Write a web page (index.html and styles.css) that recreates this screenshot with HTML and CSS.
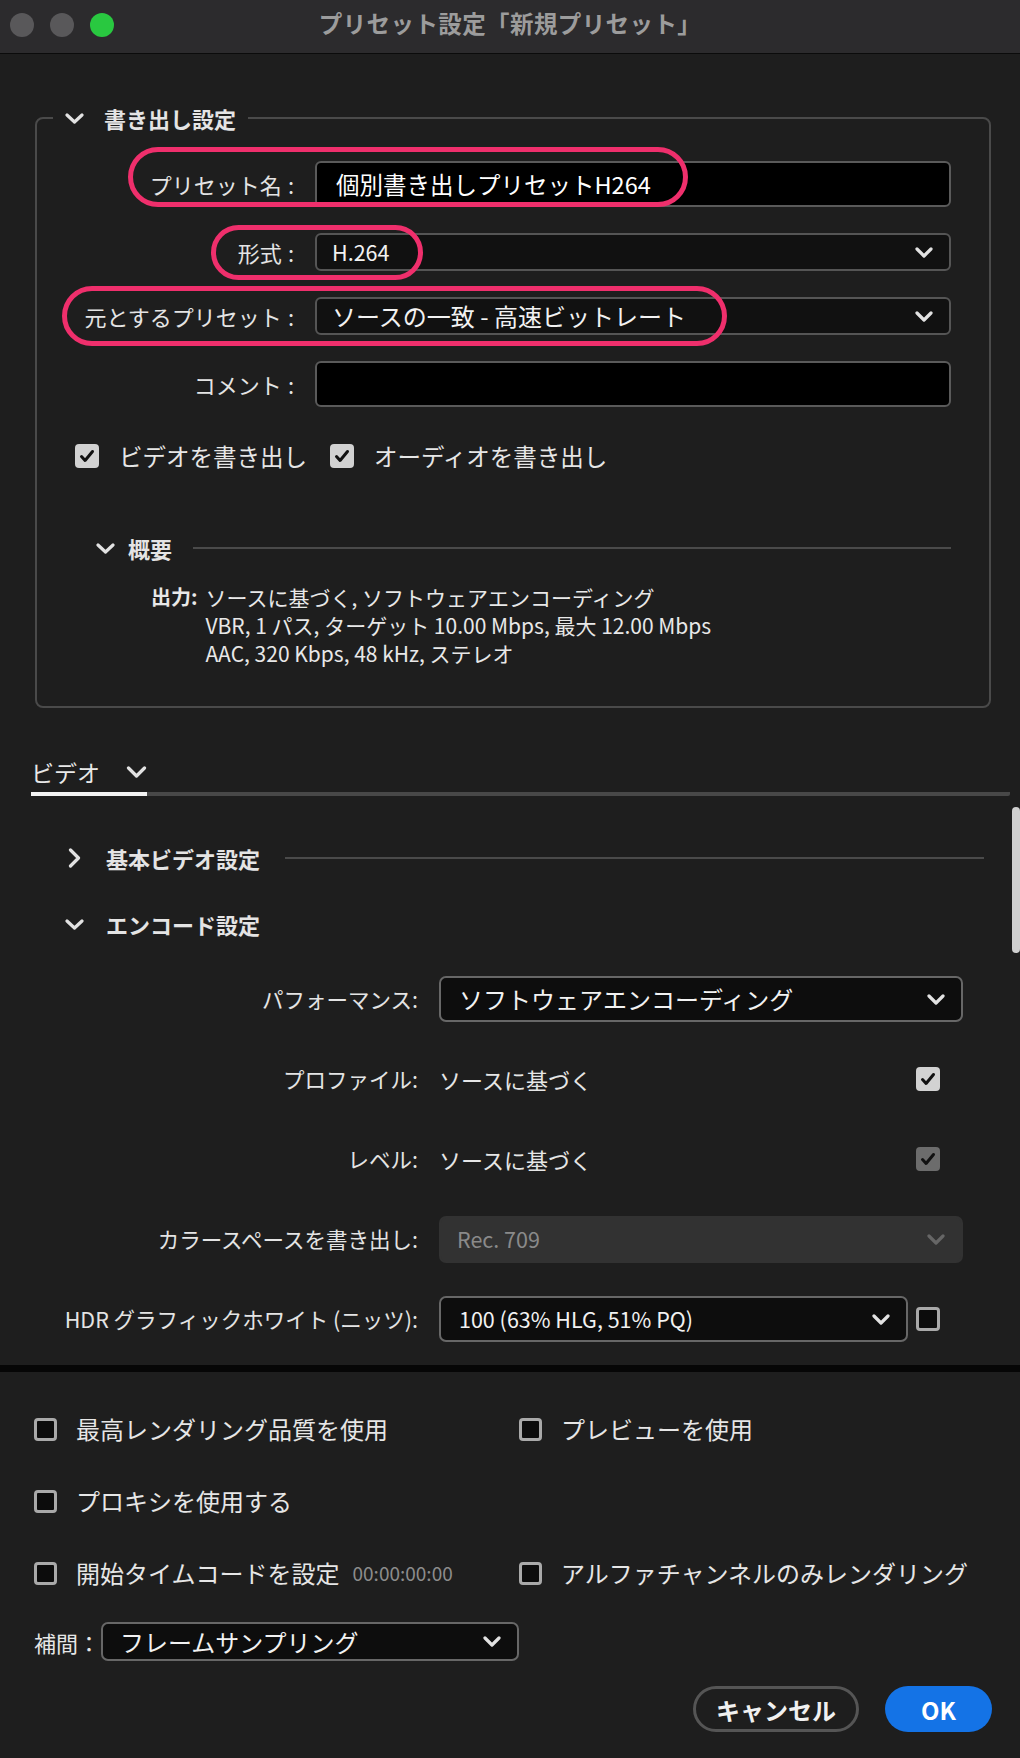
FILE: index.html
```html
<!DOCTYPE html>
<html lang="ja">
<head>
    <meta charset="UTF-8">
    <title>プリセット設定「新規プリセット」</title>
    <link rel="stylesheet" href="styles.css">
</head>
<body>
<div class="window">
    <div class="titlebar">
        <div class="lights">
            <span class="light"></span>
            <span class="light"></span>
            <span class="light green"></span>
        </div>
        <div class="title">プリセット設定「新規プリセット」</div>
        <div></div>
    </div>

    <div class="scroll-area">
        <fieldset class="export-box">
            <legend>
                <svg class="chev-down" width="19" height="11" viewBox="0 0 19 11"><path d="M2 2l7.5 7 7.5-7"/></svg>
                <span>書き出し設定</span>
            </legend>

            <div class="form">
                <div class="label">プリセット名<span class="colon">:</span></div>
                <div class="text-input">個別書き出しプリセットH264</div>

                <div class="label">形式<span class="colon">:</span></div>
                <div class="select">
                    <span class="latin">H.264</span>
                    <svg class="chev-down" width="18" height="11" viewBox="0 0 18 11"><path d="M2 2l7 7 7-7"/></svg>
                </div>

                <div class="label">元とするプリセット<span class="colon">:</span></div>
                <div class="select">
                    <span>ソースの一致 - 高速ビットレート</span>
                    <svg class="chev-down" width="18" height="11" viewBox="0 0 18 11"><path d="M2 2l7 7 7-7"/></svg>
                </div>

                <div class="label">コメント<span class="colon">:</span></div>
                <div class="text-input tall"></div>
            </div>

            <div class="checks">
                <label class="check-item">
                    <span class="box checked"><svg width="24" height="24" viewBox="0 0 24 24"><path d="M6.5 12.5l3.6 4 7.4-9"/></svg></span>
                    ビデオを書き出し
                </label>
                <label class="check-item">
                    <span class="box checked"><svg width="24" height="24" viewBox="0 0 24 24"><path d="M6.5 12.5l3.6 4 7.4-9"/></svg></span>
                    オーディオを書き出し
                </label>
            </div>

            <div class="summary-head">
                <span class="chev-slot"><svg class="chev-down" width="19" height="11" viewBox="0 0 19 11"><path d="M2 2l7.5 7 7.5-7"/></svg></span>
                <span class="head-text">概要</span>
                <span class="rule"></span>
            </div>

            <div class="summary">
                <div class="summary-label">出力:</div>
                <div>
                    ソースに基づく, ソフトウェアエンコーディング<br>
                    VBR, 1 パス, ターゲット 10.00 Mbps, 最大 12.00 Mbps<br>
                    AAC, 320 Kbps, 48 kHz, ステレオ
                </div>
            </div>
        </fieldset>

        <div class="tabs">
            <div class="tab">
                <span>ビデオ</span>
                <svg class="chev-down" width="21" height="12" viewBox="0 0 21 12"><path d="M2.5 2l8 8 8-8"/></svg>
            </div>
        </div>

        <div class="section-head">
            <span class="chev-slot"><svg class="chev-right" width="13" height="20" viewBox="0 0 13 20"><path d="M2.5 2l8 8-8 8"/></svg></span>
            <span class="head-text">基本ビデオ設定</span>
            <span class="rule"></span>
        </div>

        <div class="section-head open">
            <span class="chev-slot"><svg class="chev-down" width="19" height="11" viewBox="0 0 19 11"><path d="M2 2l7.5 7 7.5-7"/></svg></span>
            <span class="head-text">エンコード設定</span>
        </div>

        <div class="encode">
            <div class="label">パフォーマンス:</div>
            <div class="select dark">
                <span>ソフトウェアエンコーディング</span>
                <svg class="chev-down" width="18" height="11" viewBox="0 0 18 11"><path d="M2 2l7 7 7-7"/></svg>
            </div>

            <div class="label">プロファイル:</div>
            <div class="value-row">
                <span>ソースに基づく</span>
                <span class="box checked"><svg width="24" height="24" viewBox="0 0 24 24"><path d="M6.5 12.5l3.6 4 7.4-9"/></svg></span>
            </div>

            <div class="label">レベル:</div>
            <div class="value-row">
                <span>ソースに基づく</span>
                <span class="box checked dim"><svg width="24" height="24" viewBox="0 0 24 24"><path d="M6.5 12.5l3.6 4 7.4-9"/></svg></span>
            </div>

            <div class="label">カラースペースを書き出し:</div>
            <div class="select disabled">
                <span class="latin">Rec. 709</span>
                <svg class="chev-down" width="18" height="11" viewBox="0 0 18 11"><path d="M2 2l7 7 7-7"/></svg>
            </div>

            <div class="label">HDR グラフィックホワイト (ニッツ):</div>
            <div class="value-row">
                <div class="select dark grow">
                    <span class="latin">100 (63% HLG, 51% PQ)</span>
                    <svg class="chev-down" width="18" height="11" viewBox="0 0 18 11"><path d="M2 2l7 7 7-7"/></svg>
                </div>
                <span class="box"></span>
            </div>
        </div>

        <div class="scrollbar"></div>

        <div class="mark mark-name"></div>
        <div class="mark mark-format"></div>
        <div class="mark mark-base"></div>
    </div>

    <div class="divider"></div>

    <div class="bottom">
        <div class="options">
            <label class="check-item"><span class="box"></span>最高レンダリング品質を使用</label>
            <label class="check-item"><span class="box"></span>プレビューを使用</label>
            <label class="check-item"><span class="box"></span>プロキシを使用する</label>
            <div></div>
            <label class="check-item"><span class="box"></span>開始タイムコードを設定<span class="timecode">00:00:00:00</span></label>
            <label class="check-item"><span class="box"></span>アルファチャンネルのみレンダリング</label>
        </div>

        <div class="interp">
            <div class="interp-label">補間：</div>
            <div class="select dark small">
                <span>フレームサンプリング</span>
                <svg class="chev-down" width="18" height="11" viewBox="0 0 18 11"><path d="M2 2l7 7 7-7"/></svg>
            </div>
        </div>

        <div class="buttons">
            <button class="btn cancel">キャンセル</button>
            <button class="btn ok">OK</button>
        </div>
    </div>
</div>
</body>
</html>
```

FILE: styles.css
```css
body {
    margin: 0;
    background: #1e1e1e;
    color: #e6e6e6;
    font-family: "Noto Sans CJK JP", "Noto Sans", sans-serif;
    font-size: 22px;
    line-height: 30px;
}

.window {
    width: 1020px;
    height: 1758px;
    overflow: hidden;
}

/* title bar */
.titlebar {
    height: 49px;
    padding-bottom: 4px;
    background: #2c2b2d;
    border-bottom: 1px solid #0b0b0b;
    display: grid;
    grid-template-columns: 1fr auto 1fr;
    align-items: center;
}

.lights {
    display: flex;
    gap: 16px;
    padding-left: 10px;
}

.light {
    width: 24px;
    height: 24px;
    border-radius: 50%;
    background: #59585a;
}

.light.green {
    background: #29c840;
}

.title {
    margin-bottom: 4px;
    font-size: 23.5px;
    font-weight: 700;
    color: #9c9c9c;
    letter-spacing: 0.4px;
}

/* icons */
svg path {
    fill: none;
    stroke-linecap: round;
    stroke-linejoin: round;
}

.chev-down path,
.chev-right path {
    stroke: #e2e2e2;
    stroke-width: 3.2;
}

/* scrolling part */
.scroll-area {
    position: relative;
    padding-top: 49px;
    padding-bottom: 23px;
}

.export-box {
    margin: 0 29px 0 35px;
    padding: 0 38px 39px 0;
    border: 2px solid #4a4a4a;
    border-radius: 8px;
    min-width: 0;
}

.export-box legend {
    margin-left: 16px;
    padding: 0 12px;
    display: flex;
    align-items: center;
    gap: 20px;
    font-weight: 700;
    color: #e4e4e4;
}

.form {
    display: grid;
    grid-template-columns: 257px 1fr;
    column-gap: 21px;
    row-gap: 26px;
    align-items: center;
    margin-top: 28px;
}

.label {
    text-align: right;
    color: #e4e4e4;
    white-space: nowrap;
}

.colon {
    margin-left: 6px;
}

.text-input {
    box-sizing: border-box;
    height: 46px;
    background: #000;
    border: 2px solid #5a5a5a;
    border-radius: 6px;
    padding-left: 19px;
    font-size: 23.5px;
    line-height: 42px;
    color: #fff;
}

.select {
    box-sizing: border-box;
    height: 38px;
    background: #111;
    border: 2px solid #555;
    border-radius: 6px;
    padding: 0 16px 0 15px;
    display: flex;
    align-items: center;
    justify-content: space-between;
    font-size: 24px;
    color: #f2f2f2;
}

.select .latin {
    font-size: 21.5px;
}

.select.dark {
    height: 46px;
    background: #0d0d0d;
    border-color: #676767;
    border-radius: 7px;
    padding-left: 18px;
}

.select.disabled {
    height: 47px;
    background: #323232;
    border-color: #323232;
    border-radius: 7px;
    padding-left: 16px;
    color: #8a8a8a;
}

.select.disabled .chev-down path {
    stroke: #666;
}

.select.grow {
    flex: 1;
}

.select.small {
    width: 418px;
    height: 39px;
    padding-left: 17px;
}

.checks {
    display: flex;
    gap: 23px;
    margin-top: 34px;
    padding-left: 38px;
}

.check-item {
    display: flex;
    align-items: center;
    gap: 20px;
    font-size: 23.5px;
    white-space: nowrap;
}

.box {
    box-sizing: border-box;
    width: 24px;
    height: 24px;
    border-radius: 4px;
    border: 3px solid #a9a9a9;
    background: #0c0c0c;
    flex: none;
}

.box.checked {
    border: none;
    background: #d2d2d2;
}

.box.checked.dim {
    background: #6c6c6c;
}

.box svg {
    display: block;
}

.box svg path {
    stroke: #111;
    stroke-width: 3;
}

.summary-head,
.section-head {
    display: flex;
    align-items: center;
    font-weight: 700;
    color: #e4e4e4;
}

.summary-head {
    margin-top: 62px;
    padding-left: 59px;
    gap: 13px;
}

.chev-slot {
    width: 19px;
    display: flex;
    justify-content: center;
}

.rule {
    flex: 1;
    height: 2px;
    background: #4a4a4a;
    margin-left: 8px;
}

.summary {
    display: grid;
    grid-template-columns: auto 1fr;
    column-gap: 8px;
    margin-top: 20px;
    padding-left: 114px;
    font-size: 21px;
    line-height: 28px;
    color: #e8e8e8;
}

.summary-label {
    font-size: 20px;
    font-weight: 700;
}

/* tabs */
.tabs {
    margin: 49px 10px 0 31px;
    border-bottom: 4px solid #484848;
    border-radius: 2px;
    display: flex;
}

.tab {
    display: flex;
    align-items: center;
    gap: 26px;
    padding-bottom: 5px;
    margin-bottom: -4px;
    border-bottom: 4px solid #f2f2f2;
    font-size: 23px;
    color: #e8e8e8;
}

.section-head {
    margin: 47px 36px 0 65px;
    gap: 22px;
}

.section-head .rule {
    margin-left: 3px;
}

.section-head.open {
    margin-top: 36px;
}

.encode {
    display: grid;
    grid-template-columns: 418px 524px;
    column-gap: 21px;
    grid-auto-rows: 46px;
    row-gap: 34px;
    align-items: center;
    margin-top: 37px;
}

.encode .label {
    font-size: 21.5px;
}

.value-row {
    display: flex;
    align-items: center;
    justify-content: space-between;
    gap: 8px;
    padding-right: 23px;
}

.scrollbar {
    position: absolute;
    right: 0;
    top: 753px;
    width: 8px;
    height: 146px;
    border-radius: 4px;
    background: #cfcfcf;
}

/* pink annotation rings */
.mark {
    position: absolute;
    box-sizing: border-box;
    border: 5px solid #ef2f6c;
    border-radius: 40px;
}

.mark-name {
    left: 128px;
    top: 93px;
    width: 560px;
    height: 60px;
}

.mark-format {
    left: 211px;
    top: 171px;
    width: 212px;
    height: 55px;
}

.mark-base {
    left: 62px;
    top: 232px;
    width: 665px;
    height: 60px;
}

.divider {
    height: 7px;
    background: #060606;
}

/* bottom panel */
.bottom {
    padding: 41px 28px 0 34px;
}

.options {
    display: grid;
    grid-template-columns: 485px auto;
    grid-auto-rows: 32px;
    row-gap: 40px;
    align-items: center;
}

.options .check-item {
    gap: 19px;
    font-size: 24px;
}

.options .box {
    width: 23px;
    height: 23px;
}

.timecode {
    margin-left: -6px;
    font-size: 19px;
    color: #8c8c8c;
}

.interp {
    display: flex;
    align-items: center;
    margin-top: 33px;
}

.interp-label {
    width: 67px;
}

.buttons {
    display: flex;
    justify-content: flex-end;
    gap: 26px;
    margin-top: 25px;
}

.btn {
    box-sizing: border-box;
    height: 46px;
    border-radius: 23px;
    font-family: inherit;
    font-size: 24px;
    font-weight: 700;
    color: #f0f0f0;
}

.btn.cancel {
    width: 166px;
    background: transparent;
    border: 3px solid #555;
}

.btn.ok {
    width: 107px;
    background: #1473e6;
    border: none;
    color: #fff;
}
```
